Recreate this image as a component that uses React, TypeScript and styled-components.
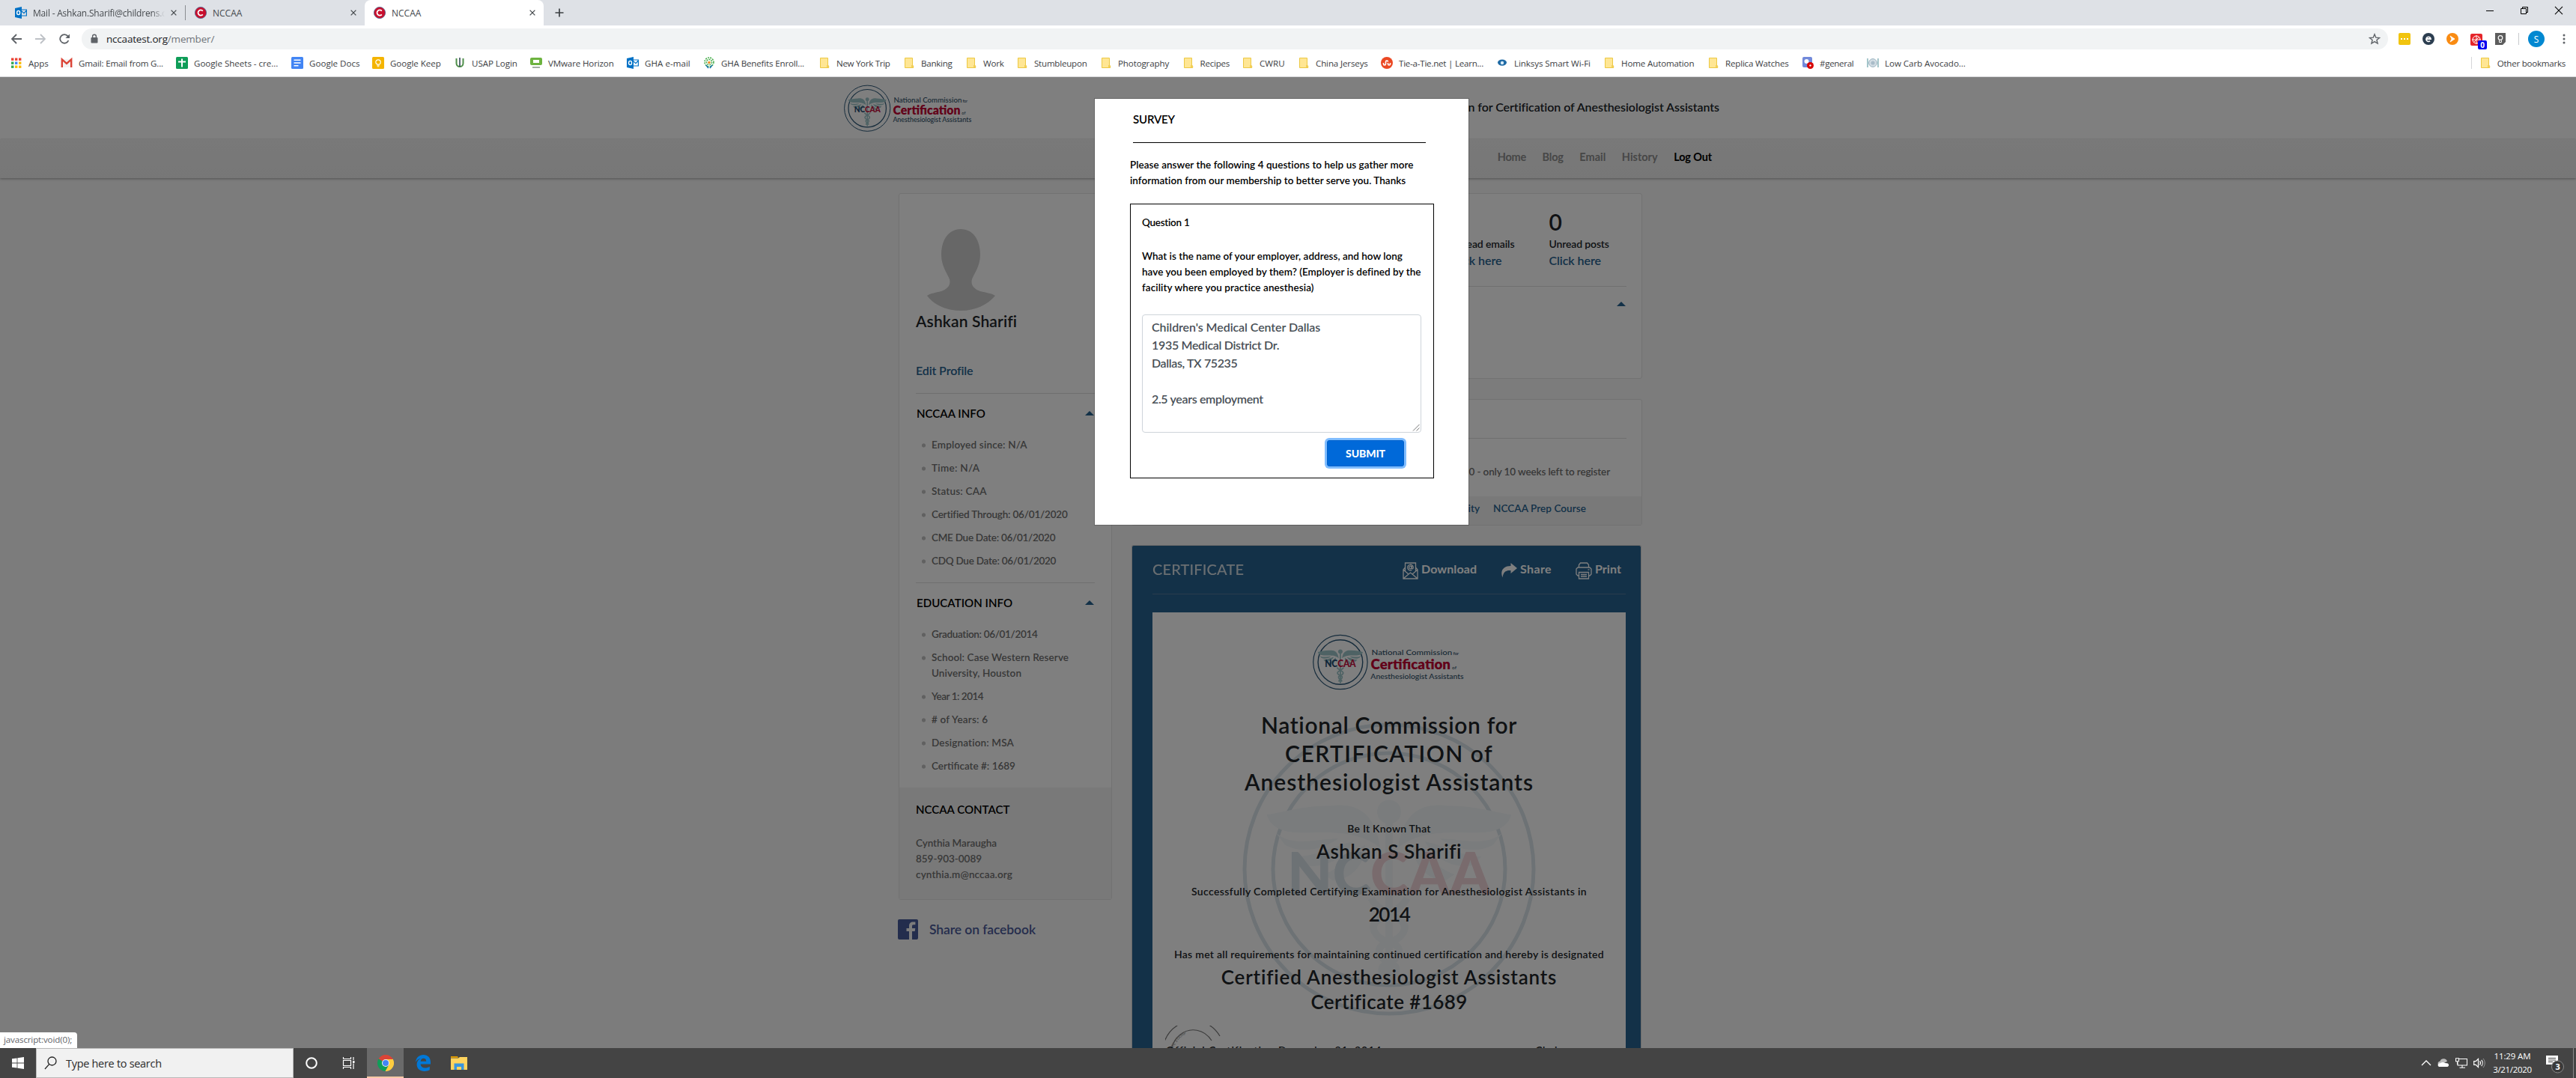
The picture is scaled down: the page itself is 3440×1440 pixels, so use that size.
import React from "react";
import styled, { createGlobalStyle, css } from "styled-components";

const UI = `"Open Sans", "Noto Sans", sans-serif`;
const BODY = `Lato, "Open Sans", sans-serif`;
const BLUE = "#266290";

const Global = createGlobalStyle`
  * { box-sizing: border-box; }
  html, body { margin: 0; background: #fff; }
  body { font-family: ${BODY}; font-weight: 500; overflow: hidden; }
`;

/* run of text with its own tracking */
const T = styled.span<{ $ls?: number }>`white-space: pre; justify-self: start; letter-spacing: ${(p) => p.$ls ?? 0}px;`;

const Screen = styled.div`
  width: 3440px; height: 1440px; display: flex; flex-direction: column; overflow: hidden;
`;

/* ---------- browser chrome ---------- */
const TabStrip = styled.div`
  height: 34px; flex: none; display: flex; align-items: center; background: #dee1e6; padding-left: 8px; font-family: ${UI}; font-size: 12px; color: #45494d; font-weight: 400;
`;
const Tab = styled.div<{ $active?: boolean }>`
  width: 239px; flex: none; height: 34px; display: flex; align-items: center; padding: 0 11px 0 12px; gap: 8px;
  ${(p) => p.$active && css`background: #fff; border-radius: 8px 8px 0 0;`}
  svg { flex: none; }
`;
const TabSeparator = styled.div`width: 1px; height: 20px; background: #8a8d91; flex: none;`;
const TabTitle = styled.div<{ $fade?: boolean }>`
  flex: 1 1 0; min-width: 0; overflow: hidden; white-space: nowrap;
  ${(p) => p.$fade && css`mask-image: linear-gradient(90deg, #000 90%, transparent);`}
`;
const WinButtons = styled.div`
  margin-left: auto; display: flex; height: 28px; align-items: center; align-self: flex-start; padding-right: 17px; gap: 34px;
`;
const NewTab = styled.div`display: flex; align-items: center; padding-left: 15px;`;

const Toolbar = styled.div`
  height: 36px; flex: none; background: #fff; display: flex; align-items: center; padding: 0 14px; font-family: ${UI}; font-weight: 400;
`;
const NavIcons = styled.div`display: flex; gap: 16px; width: 95px;`;
const Omnibox = styled.div`
  width: 3082px; height: 28px; border-radius: 14px; background: #f1f3f4; display: flex; align-items: center; padding: 0 10px 0 11px; font-size: 13.5px; color: #202124;
  svg:last-child { margin-left: auto; }
`;
const Url = styled.div`margin-left: 10px; i { font-style: normal; color: #70757a; }`;
const Extensions = styled.div`display: flex; align-items: center; flex: 1; padding-left: 14px; gap: 16px;`;
const Divider = styled.div`width: 1px; height: 16px; background: #c8cacd;`;
const Avatar = styled.div`
  width: 22px; height: 22px; border-radius: 50%; background: #0288d1; color: #fff; font-size: 12px; display: grid; place-items: center; margin: 0 8px 0 -4px;
`;
const ExtWithBadge = styled.div`position: relative; width: 16px; height: 16px;`;
const Badge = styled.div`
  position: absolute; left: 10px; top: 10px; width: 12px; height: 12px; border-radius: 2px; background: #0000f0; color: #fff; font-size: 10px; font-weight: 700; line-height: 12px; text-align: center;
`;
const Bookmarks = styled.div`
  height: 33px; flex: none; background: #fff; border-bottom: 1px solid #d5d6d8; display: flex; align-items: center; padding: 0 14px 4px; font-family: ${UI}; font-size: 11.6px; font-weight: 400; color: #3c4043;
`;
const Bookmark = styled.div<{ $w: number }>`width: ${(p) => p.$w}px; flex: none; display: flex; align-items: center; gap: 8px; white-space: nowrap; svg { flex: none; }`;
const OtherBookmarks = styled.div`margin-left: auto; display: flex; align-items: center; gap: 8px; border-left: 1px solid #d5d6d8; padding-left: 10px; height: 16px;`;

/* ---------- page ---------- */
const Page = styled.div`position: relative; height: 1297px; flex: none; overflow: hidden; background: #f8f8f8;`;
const Header = styled.div`height: 83px; background: #fff; display: flex; justify-content: space-between; padding: 10px 1144px 0 1127px;`;
const HeaderTitle = styled.div`font-size: 16px; line-height: 24px; color: #212529; padding-top: 18px; font-weight: 600; white-space: nowrap;`;
const NavBar = styled.div`
  height: 52px; background: linear-gradient(#f2f2f2, #efefef); box-shadow: 0 1px 3px rgba(0,0,0,.35); position: relative;
  display: flex; justify-content: flex-end; padding: 12px 1154px 0 0; gap: 21.5px; font-size: 14.5px; line-height: 24px; font-weight: 700;
`;
const NavLink = styled.div<{ $strong?: boolean }>`color: ${(p) => (p.$strong ? "#000" : "#8e8e8e")};`;
const Content = styled.div`display: grid; grid-template-columns: 285px 682px; column-gap: 26px; padding: 20px 0 0 1200px; align-items: start;`;
const Column = styled.div`display: flex; flex-direction: column;`;
const Card = styled.div<{ $h: number; $mb?: number }>`
  height: ${(p) => p.$h}px; margin-bottom: ${(p) => p.$mb ?? 0}px; background: #fff; border: 1px solid #e4e4e4; border-radius: 3px; display: flex; flex-direction: column;
`;
const SidePad = styled.div`padding: 47px 22px 18px 22px; flex: none;`;
const AvatarArt = styled.svg`display: block; margin-left: 14px;`;
const Name = styled.div`font-size: 21px; line-height: 26px; margin-top: 1px; color: #212529; font-weight: 600;`;
const EditLink = styled.div`font-size: 16px; line-height: 24px; margin-top: 41px; color: ${BLUE}; font-weight: 600;`;
const Rule = styled.div<{ $mt?: number }>`height: 1px; background: #dedede; margin-top: ${(p) => p.$mt ?? 0}px;`;
const Section = styled.div`display: flex; align-items: center; justify-content: space-between; margin: 14px 1px 20px 1px; font-size: 15px; line-height: 24px; color: #000; font-weight: 600;`;
const Triangle = styled.div`border: 6px solid transparent; border-top-width: 0; border-bottom-color: ${BLUE};`;
const List = styled.div`display: flex; flex-direction: column; gap: 10px; font-size: 13.5px; line-height: 21px; color: #707070; font-weight: 600;`;
const Item = styled.div`
  padding-left: 21px; display: grid;
  background: radial-gradient(circle at 10.5px 11px, #c2c2c2 2.2px, transparent 3px);
`;
const Contact = styled.div`flex: 1; background: #f2f2f2; padding: 17px 22px 0; font-size: 13.5px; line-height: 21px; color: #707070; font-weight: 600;`;
const ContactTitle = styled.div`font-size: 15px; line-height: 24px; color: #000; margin-bottom: 23px;`;
const Facebook = styled.div`display: flex; align-items: center; gap: 15px; margin: 26px 0 0 -1px; font-size: 17.5px; color: #4a5a9a; font-weight: 600;`;

const Stats = styled.div`display: grid; grid-template-columns: repeat(2, 132.5px); padding: 18px 0 0 424px; color: #212529; height: 123px; flex: none;`;
const Stat = styled.div`display: flex; flex-direction: column;`;
const StatNumber = styled.div`font-size: 30px; line-height: 38px; font-weight: 600;`;
const StatLabel = styled.div`font-size: 14px; line-height: 21px; font-weight: 600;`;
const StatLink = styled.div`font-size: 16px; line-height: 24px; color: ${BLUE}; font-weight: 600;`;
const MainRule = styled(Rule)`margin-left: 27px; margin-right: 20px; flex: none;`;
const Toggle = styled.div`display: flex; justify-content: flex-end; padding: 20px 21px 0 0;`;
const Notice = styled.div`height: 77px; padding: 34px 42px 0 0; text-align: right; font-size: 13.5px; line-height: 21px; color: #707070; font-weight: 600;`;
const Links = styled.div`flex: 1; background: #f2f2f2; display: flex; justify-content: flex-end; gap: 18px; padding: 6px 74px 0 0; font-size: 13.5px; line-height: 21px; color: ${BLUE}; font-weight: 600;`;

const Certificate = styled.div`background: ${BLUE}; border: 1px solid #d5d5d5; border-bottom: 0; border-radius: 3px 3px 0 0; height: 800px; padding: 19px 20px 0 27px; width: 681px;`;
const CertBar = styled.div`display: flex; justify-content: space-between; height: 45px; color: #fff; font-size: 20px; line-height: 24px; padding-right: 6px;`;
const CertTitle = styled.div`color: #f2f2f2; opacity: .85;`;
const Actions = styled.div`display: flex; gap: 32px; font-size: 16px; font-weight: 700;`;
const Action = styled.div`display: flex; gap: 4px; svg { margin-top: 3px; }`;
const CertRule = styled.div`height: 1px; background: #53799a; margin-bottom: 24px;`;
const Paper = styled.div`position: relative; background: #fff; height: 700px; padding-top: 29px; display: flex; flex-direction: column; align-items: center; color: #212529;`;
const Watermark = styled.svg`position: absolute; left: 118px; top: 145px;`;
const Stamp = styled.svg`position: absolute; left: 17px; top: 552px;`;
const PaperBody = styled.div`position: relative; display: flex; flex-direction: column; align-items: center;`;
const Headline = styled.div`font-size: 30px; line-height: 38px; margin-top: 26px; margin-bottom: 33px; display: flex; flex-direction: column; align-items: center; font-weight: 600;`;
const Small = styled.div`font-size: 14px; line-height: 21px; margin-bottom: 4.5px; font-weight: 600;`;
const Big = styled.div<{ $mb?: number }>`font-size: 26px; line-height: 33px; margin-bottom: ${(p) => p.$mb ?? 25.5}px; font-weight: 600;`;
const Signatures = styled.div`display: flex; width: 632px; padding: 0 40px 0 18px; justify-content: space-between; font-size: 14px; line-height: 21px; margin-top: 37px; font-weight: 600;`;

/* ---------- survey dialog ---------- */
const Backdrop = styled.div`position: absolute; inset: 0; background: rgba(0,0,0,.5); padding: 28px 0 0 1461px;`;
const Dialog = styled.div`width: 501px; height: 571px; background: #fff; background-clip: padding-box; border: 1px solid rgba(0,0,0,.2); padding: 15px 46px 0 47px; color: #000;`;
const DialogTitle = styled.div`margin: 0 11px 0 4px; height: 44px; border-bottom: 1px solid #000; font-size: 15px; line-height: 24px; font-weight: 600;`;
const Intro = styled.div`margin-top: 19px; font-size: 13.5px; line-height: 21px; font-weight: 600; display: grid;`;
const Question = styled.div`margin-top: 20px; height: 367px; border: 1px solid #000; padding: 14px 16px 0 15px; font-size: 13.5px; line-height: 21px; font-weight: 600;`;
const Prompt = styled.div`display: grid; margin: 24px 0 25px;`;
const Answer = styled.div`
  position: relative; height: 158px; border: 1px solid #ced4da; border-radius: 4px; padding: 4px 12px; font-size: 16px; line-height: 24px; color: #495057;
  display: grid; grid-auto-rows: 24px;
  svg { position: absolute; right: 1px; bottom: 1px; }
`;
const Submit = styled.button`
  display: block; margin: 10px 23px 0 auto; width: 103px; height: 35px; border: 1px solid #0062cc; border-radius: 3px; background: #0069d9; box-shadow: 0 0 0 3px #80bdff;
  color: #fff; font: 900 14px/21px ${BODY}; padding: 0;
`;

const StatusBubble = styled.div`
  position: absolute; left: 0; bottom: 0; width: 103px; height: 21px; background: #fff; border-radius: 0 4px 0 0; padding-left: 5px; font: 400 11.6px/20px ${UI}; color: #5f6368;
`;

/* ---------- taskbar ---------- */
const Taskbar = styled.div`height: 40px; flex: none; background: #444; display: flex; align-items: center; font-family: ${UI}; font-weight: 400; color: #fff;`;
const Cell = styled.div<{ $w: number; $on?: boolean }>`
  width: ${(p) => p.$w}px; height: 40px; display: grid; place-items: center; flex: none;
  ${(p) => p.$on && css`background: #6a6a6a; border-bottom: 2px solid #f8c9a6; padding-top: 2px;`}
`;
const Search = styled.div`width: 344px; height: 40px; background: #f1f1f1; border: 1px solid #b9b9b9; display: flex; align-items: center; gap: 12px; padding-left: 10px; font-size: 14.5px; color: #2b2b2b;`;
const Tray = styled.div`margin-left: auto; display: flex; align-items: center; padding-right: 3px; gap: 8px; height: 40px;`;
const Clock = styled.div`width: 54px; margin-right: 7px; display: flex; flex-direction: column; align-items: center; font-size: 11.5px; line-height: 18px;`;
const Peek = styled.div`width: 1px; height: 40px; background: #8a8a8a; margin-left: 3px;`;

/* ---------- drawings ---------- */
const Wings = ({ fill }: { fill: string }) => (
  <g fill={fill}>
    <circle cx="50" cy="31" r="4" />
    <rect x="48.8" y="33" width="2.4" height="56" rx="1" />
    {[1, -1].map((s) => (
      <g key={s} transform={s === 1 ? undefined : "translate(100 0) scale(-1 1)"}>
        <path d="M47 43C45 30 38 28 30 29 21 29 15 31 9 32 10 36 14 38 20 38 30 38 39 37 47 43Z" />
        <path d="M12 38C17 43 26 40 33 40 27 44 20 45 15 42Z" />
        <path d="M19 46C26 46 32 42 38 41 34 48 27 50 22 49Z" />
        <path d="M28 52C34 50 37 45 42 42 42 49 37 54 31 54Z" />
      </g>
    ))}
    <path fill="none" stroke={fill} strokeWidth="2.4" d="M44 60C47 66 57 66 55 71 53 76 45 74 47 79 49 83 54 81 52 86M56 60C53 66 43 66 45 71 47 76 55 74 53 79 51 83 46 81 48 86" />
  </g>
);

const Logo = ({ scale }: { scale: number }) => (
  <svg width={172 * scale} height={64 * scale} viewBox="0 0 172 64">
    <g fill="none" stroke="#2d5878">
      <circle cx="31.2" cy="31.7" r="30.6" strokeWidth="1" />
      <circle cx="31.2" cy="31.7" r="25.2" strokeWidth="1.2" />
    </g>
    <g transform="translate(.2 .5) scale(.62)"><Wings fill="#9cc4c8" /></g>
    <text x="13.7" y="37.2" fontSize="10.4" fontWeight="900" textLength="35" lengthAdjust="spacingAndGlyphs" fill="#1e4a70">
      NC<tspan fill="#c40d3c">CAA</tspan>
    </text>
    <g fill="#2f5068" fontSize="8.8">
      <text x="66.4" y="24" textLength="91" lengthAdjust="spacingAndGlyphs">National Commission</text>
      <text x="158.5" y="24" fontSize="5.5" textLength="6.5">for</text>
      <text x="65.6" y="40" fontSize="16" fontWeight="800" fill="#c40032" textLength="90" lengthAdjust="spacingAndGlyphs">Certification</text>
      <text x="157.2" y="40" fontSize="5.5" textLength="5.2">of</text>
      <text x="65.4" y="50.4" textLength="105" lengthAdjust="spacingAndGlyphs">Anesthesiologist Assistants</text>
    </g>
  </svg>
);

const Outlook = () => (
  <svg width="16" height="16" viewBox="0 0 16 16">
    <path fill="#0072c6" d="M0 2 9 0v16L0 14Z" />
    <path fill="none" stroke="#0072c6" strokeWidth="1.2" d="M9 4h6.4v8H9M9 6l3 2.6L15.4 5" />
    <ellipse cx="4.6" cy="8" rx="2" ry="2.6" fill="none" stroke="#fff" strokeWidth="1.4" />
  </svg>
);
const NccaaIcon = () => (
  <svg width="16" height="16" viewBox="0 0 16 16">
    <circle cx="8" cy="8" r="7.6" fill="#c8102e" stroke="#4b5f8a" strokeWidth=".8" />
    <path d="M10.8 5.6A3.6 3.6 0 1 0 10.8 10.4" fill="none" stroke="#fff" strokeWidth="1.8" />
  </svg>
);
const Cross = ({ s = 8, c = "#45494d", w = 1.6 }) => (
  <svg width={s} height={s} viewBox="0 0 10 10"><path d="M.8.8 9.2 9.2M9.2.8.8 9.2" stroke={c} strokeWidth={w} /></svg>
);
const Folder = () => (
  <svg width="16" height="16" viewBox="0 0 16 16">
    <path fill="#ffe694" stroke="#ecc843" d="M2.5 1.5h10V12h1.2v2.5H2.5Z" />
    <path fill="#f3cf57" d="M11 11h2.5v3.5H11Z" />
  </svg>
);
const Apps = () => (
  <svg width="16" height="16" viewBox="0 0 16 16">
    {["#ea4335", "#ea4335", "#ea4335", "#34a853", "#4285f4", "#fbbc05", "#34a853", "#fbbc05", "#fbbc05"].map((c, i) => (
      <rect key={i} x={1 + (i % 3) * 5} y={1.5 + Math.floor(i / 3) * 5} width="3.4" height="3.4" fill={c} />
    ))}
  </svg>
);
const Glyph = ({ k }: { k: string }) => {
  if (k === "apps") return <Apps />;
  if (k === "folder") return <Folder />;
  if (k === "outlook") return <Outlook />;
  return (
    <svg width="16" height="16" viewBox="0 0 16 16">
      {k === "gmail" && <><path fill="#f3f3f3" d="M1 3h14v11H1Z" /><path fill="none" stroke="#db4437" strokeWidth="2.4" d="M1.8 14V3.4L8 9l6.2-5.6V14" /></>}
      {k === "sheets" && <><rect width="16" height="16" rx="1.5" fill="#0f9d58" /><path d="M8 2.5v11M3 6.5h10" stroke="#fff" strokeWidth="2" /></>}
      {k === "docs" && <><rect width="16" height="16" rx="1.5" fill="#4285f4" /><path d="M3.5 4.2h9M3.5 8h9M3.5 11.8h6" stroke="#fff" strokeWidth="1.6" /></>}
      {k === "keep" && <><rect width="16" height="16" rx="1.5" fill="#f4b400" /><circle cx="8" cy="7" r="3.2" fill="none" stroke="#fff" strokeWidth="1.2" /><path d="M6.3 11.2h3.4M6.6 12.8h2.8" stroke="#fff" /></>}
      {k === "usap" && <><path d="M3.5 2v6.5a4.5 4.5 0 0 0 9 0V2" fill="none" stroke="#4e8f4a" strokeWidth="2" /><path d="M8 1v12" stroke="#345" strokeWidth="1.6" /></>}
      {k === "vm" && <><rect x="0" y="1" width="16" height="10" rx="2" fill="#6db33f" /><rect x="4" y="4" width="8" height="4" fill="#fff" /><path d="M3 14h10" stroke="#8a9a8a" strokeWidth="1.6" /></>}
      {k === "tree" && <><g stroke="#4caf50" strokeWidth="1.6" strokeDasharray="2 1.2" fill="none"><circle cx="8" cy="7" r="6" /><circle cx="8" cy="7" r="3.6" /></g><circle cx="8" cy="7.5" r="1.8" fill="#f28c28" /><path d="M4 11l3 4M12 11l-3 4" stroke="#1976a8" strokeWidth="1.6" /></>}
      {k === "tie" && <><circle cx="8" cy="8" r="8" fill="#eb4823" /><path d="M3.5 8v1.4a1.5 1.5 0 0 0 3 0V6.6a1.5 1.5 0 0 1 3 0M12.5 8v1.4a1.5 1.5 0 0 1-3 0V8" fill="none" stroke="#fff" strokeWidth="1.6" /></>}
      {k === "linksys" && <><ellipse cx="8" cy="7.6" rx="6" ry="4.2" fill="#1f6aa5" /><circle cx="8" cy="8" r="2.2" fill="#d8ecf8" /></>}
      {k === "general" && <><rect x="1" y="0" width="13" height="14" rx="2" fill="#7289da" /><circle cx="6.5" cy="6" r="3" fill="#fff" /><circle cx="11.5" cy="11.5" r="4.5" fill="#d80000" /><circle cx="11.5" cy="11.5" r="1.2" fill="#fff" /></>}
      {k === "carb" && <><path d="M1 2v12M15 2v12" stroke="#8fb8bf" strokeWidth="1.6" /><circle cx="8" cy="8" r="5.4" fill="#d3dde4" stroke="#9ab3c0" /><circle cx="8" cy="8" r="2.6" fill="#a9bcc9" /></>}
    </svg>
  );
};

/* icon, label, slot width, letter spacing */
const bookmarks: [string, string, number, number][] = [
  ["apps", "Apps", 67, -0.1], ["gmail", "Gmail: Email from G...", 154, -0.18], ["sheets", "Google Sheets - cre...", 154, -0.03], ["docs", "Google Docs", 108, 0],
  ["keep", "Google Keep", 109, -0.06], ["usap", "USAP Login", 102, -0.06], ["vm", "VMware Horizon", 129, -0.15], ["outlook", "GHA e-mail", 102, 0.02],
  ["tree", "GHA Benefits Enroll...", 154, -0.17], ["folder", "New York Trip", 113, -0.32], ["folder", "Banking", 83, -0.26], ["folder", "Work", 68, -0.26],
  ["folder", "Stumbleupon", 112, -0.24], ["folder", "Photography", 109.5, -0.14], ["folder", "Recipes", 79.5, -0.25], ["folder", "CWRU", 75, 0],
  ["folder", "China Jerseys", 111, -0.15], ["tie", "Tie-a-Tie.net | Learn...", 154, -0.24], ["linksys", "Linksys Smart Wi-Fi", 143, -0.1], ["folder", "Home Automation", 139, -0.15],
  ["folder", "Replica Watches", 126, -0.2], ["general", "#general", 87, -0.32], ["carb", "Low Carb Avocado...", 140, -0.06],
];

/* line(s), letter spacing */
const nccaaInfo: [string[], number][] = [
  [["Employed since: N/A"], 0.18], [["Time: N/A"], 0.3], [["Status: CAA"], 0.21], [["Certified Through: 06/01/2020"], -0.19],
  [["CME Due Date: 06/01/2020"], -0.27], [["CDQ Due Date: 06/01/2020"], -0.26],
];
const educationInfo: [string[], number][] = [
  [["Graduation: 06/01/2014"], -0.33], [["School: Case Western Reserve", "University, Houston"], 0.09], [["Year 1: 2014"], -0.49],
  [["# of Years: 6"], 0.2], [["Designation: MSA"], 0.16], [["Certificate #: 1689"], 0],
];
const InfoList = ({ rows }: { rows: [string[], number][] }) => (
  <List>{rows.map(([lines, ls]) => <Item key={lines[0]}>{lines.map((l) => <T key={l} $ls={ls}>{l}</T>)}</Item>)}</List>
);

export default function App() {
  return (
    <Screen>
      <Global />
      <TabStrip>
        <Tab><Outlook /><TabTitle $fade><T $ls={-0.2}>Mail - Ashkan.Sharifi@childrens.c</T></TabTitle><Cross /></Tab>
        <TabSeparator />
        <Tab><NccaaIcon /><TabTitle><T>NCCAA</T></TabTitle><Cross /></Tab>
        <Tab $active><NccaaIcon /><TabTitle><T>NCCAA</T></TabTitle><Cross /></Tab>
        <NewTab><svg width="12" height="12" viewBox="0 0 12 12"><path d="M6 .5v11M.5 6h11" stroke="#3c4043" strokeWidth="1.7" /></svg></NewTab>
        <WinButtons>
          <svg width="12" height="12" viewBox="0 0 12 12"><path d="M1 6.5h10" stroke="#000" /></svg>
          <svg width="12" height="12" viewBox="0 0 12 12"><path d="M1.5 3.5h7v7h-7ZM3.5 3V1.5h7v7H9" fill="none" stroke="#000" /></svg>
          <Cross s={12} c="#000" w={0.9} />
        </WinButtons>
      </TabStrip>
      <Toolbar>
        <NavIcons>
          <svg width="16" height="16" viewBox="0 0 16 16"><path d="M15 8H2.5M8 2 2 8l6 6" fill="none" stroke="#5f6368" strokeWidth="1.8" /></svg>
          <svg width="16" height="16" viewBox="0 0 16 16"><path d="M1 8h12.5M8 2l6 6-6 6" fill="none" stroke="#bdc1c6" strokeWidth="1.8" /></svg>
          <svg width="16" height="16" viewBox="0 0 16 16"><path d="M13.4 10A5.8 5.8 0 1 1 12.6 4.4L14 6" fill="none" stroke="#5f6368" strokeWidth="1.8" /><path d="M15 1.4V7H9.4Z" fill="#5f6368" /></svg>
        </NavIcons>
        <Omnibox>
          <svg width="12" height="14" viewBox="0 0 12 14"><rect x="1.5" y="5" width="9" height="7.5" rx="1" fill="#5f6368" /><path d="M3.6 5.5V3.6a2.4 2.4 0 0 1 4.8 0v1.9" fill="none" stroke="#5f6368" strokeWidth="1.4" /></svg>
          <Url><T $ls={-0.19}>nccaatest.org<i>/member/</i></T></Url>
          <svg width="16" height="16" viewBox="0 0 16 16"><path d="m8 1.8 1.8 4.4 4.7.3-3.6 3 1.2 4.6L8 11.6l-4.1 2.5 1.2-4.6-3.6-3 4.7-.3Z" fill="none" stroke="#5f6368" strokeWidth="1.4" /></svg>
        </Omnibox>
        <Extensions>
          <svg width="16" height="16" viewBox="0 0 16 16"><rect width="16" height="16" rx="2" fill="#f1c40f" /><path d="M3 8h2M7 8h2M11 8h2" stroke="#fff" strokeWidth="2" /></svg>
          <svg width="16" height="16" viewBox="0 0 16 16"><circle cx="8" cy="8" r="8" fill="#2c3e50" /><path d="M4.8 8h6.2A3 3 0 1 0 10 10.6" fill="none" stroke="#fff" strokeWidth="1.8" /></svg>
          <svg width="16" height="16" viewBox="0 0 16 16"><circle cx="8" cy="8" r="8" fill="#f98b12" /><path d="m5 4 6 4-6 4 2-4Z" fill="#fff" stroke="#fff" strokeWidth=".8" /></svg>
          <ExtWithBadge>
            <svg width="16" height="16" viewBox="0 0 16 16"><rect width="16" height="16" rx="2" fill="#e5252a" /><circle cx="8" cy="8" r="5" fill="none" stroke="#fff" /><path d="M8 2v12M2 8h12M4 12l8-8" stroke="#fff" strokeWidth=".9" /></svg>
            <Badge>0</Badge>
          </ExtWithBadge>
          <svg width="16" height="16" viewBox="0 0 16 16"><path fill="#5d5d5d" d="M1 0h14v12l-4 4H1Z" /><circle cx="8" cy="6.5" r="2.8" fill="none" stroke="#fff" strokeWidth="1.2" /><path d="M6.6 9.5v3h2.8v-3" fill="none" stroke="#fff" /></svg>
          <Divider />
          <Avatar>S</Avatar>
          <svg width="4" height="16" viewBox="0 0 4 16"><g fill="#5f6368"><circle cx="2" cy="3" r="1.5" /><circle cx="2" cy="8" r="1.5" /><circle cx="2" cy="13" r="1.5" /></g></svg>
        </Extensions>
      </Toolbar>
      <Bookmarks>
        {bookmarks.map(([k, label, w, ls], i) => (
          <Bookmark key={i} $w={w}><Glyph k={k} /><T $ls={ls}>{label}</T></Bookmark>
        ))}
        <OtherBookmarks><Folder /><T $ls={-0.26}>Other bookmarks</T></OtherBookmarks>
      </Bookmarks>

      <Page>
        <Header>
          <Logo scale={1} />
          <HeaderTitle><T $ls={-0.06}>National Commission for Certification of Anesthesiologist Assistants</T></HeaderTitle>
        </Header>
        <NavBar>
          <NavLink><T $ls={-0.2}>Home</T></NavLink><NavLink><T $ls={-0.16}>Blog</T></NavLink><NavLink><T>Email</T></NavLink><NavLink><T>History</T></NavLink><NavLink $strong><T $ls={-0.14}>Log Out</T></NavLink>
        </NavBar>
        <Content>
          <Column>
            <Card $h={944}>
              <SidePad>
                <AvatarArt width="92" height="109" viewBox="0 0 92 109"><path fill="#cfcfcf" d="M46 0C62 0 72 14 72 34 72 50 64 59 61 67 59 75 64 80 72 83 80 85 88 86 92 89 82 101 66 109 46 109 26 109 10 101 1 89 5 86 12 85 20 83 28 80 33 75 31 67 28 59 20 50 20 34 20 14 30 0 46 0Z" /></AvatarArt>
                <Name><T $ls={0.15}>Ashkan Sharifi</T></Name>
                <EditLink><T $ls={-0.12}>Edit Profile</T></EditLink>
                <Rule $mt={18} />
                <Section><T $ls={0.04}>NCCAA INFO</T><Triangle /></Section>
                <InfoList rows={nccaaInfo} />
                <Rule $mt={18} />
                <Section><T $ls={0.06}>EDUCATION INFO</T><Triangle /></Section>
                <InfoList rows={educationInfo} />
              </SidePad>
              <Contact>
                <ContactTitle><T $ls={0.02}>NCCAA CONTACT</T></ContactTitle>
                <div><T $ls={-0.08}>Cynthia Maraugha</T></div>
                <div><T $ls={-0.03}>859-903-0089</T></div>
                <div><T $ls={0.15}>cynthia.m@nccaa.org</T></div>
              </Contact>
            </Card>
            <Facebook>
              <svg width="27" height="27" viewBox="0 0 27 27"><rect width="27" height="27" rx="2" fill="#465a9a" /><path fill="#f8f8f8" d="M15 27V16h-3.5v-4H15V9c0-3.6 2-5.5 5.400-5.500h3v3.800H21c-1.600 0-2 .8-2 2V12h4.300l-.6 4H19v11Z" /></svg>
              <T $ls={-0.09}>Share on facebook</T>
            </Facebook>
          </Column>
          <Column>
            <Card $h={248} $mb={27}>
              <Stats>
                <Stat><StatNumber>0</StatNumber><StatLabel><T $ls={-0.11}>Unread emails</T></StatLabel><StatLink><T $ls={-0.07}>Click here</T></StatLink></Stat>
                <Stat><StatNumber>0</StatNumber><StatLabel><T $ls={-0.14}>Unread posts</T></StatLabel><StatLink><T $ls={-0.07}>Click here</T></StatLink></Stat>
              </Stats>
              <MainRule />
              <Toggle><Triangle /></Toggle>
            </Card>
            <Card $h={169} $mb={26}>
              <MainRule $mt={51} />
              <Notice><T $ls={-0.13}>0 - only 10 weeks left to register</T></Notice>
              <Links><T>Charity</T><T $ls={0.08}>NCCAA Prep Course</T></Links>
            </Card>
            <Certificate>
              <CertBar>
                <CertTitle><T $ls={0.15}>CERTIFICATE</T></CertTitle>
                <Actions>
                  <Action>
                    <svg width="21" height="23" viewBox="0 0 21 23"><g fill="none" stroke="#fff" strokeWidth="1.3"><path d="M3.5 12V1h14v11M3.5 7 1 10v12h19V10l-2.5-3M1 10l7 6-7 6M20 10l-7 6 7 6M8 16l2.5-2 2.5 2" /><circle cx="10.5" cy="7" r="1.8" /><path d="M12.300 5v3.200c.5 1.300 2 .6 2-1.200a3.800 3.800 0 1 0-2 3.400" /></g></svg>
                    <T $ls={0.09}>Download</T>
                  </Action>
                  <Action>
                    <svg width="22" height="22" viewBox="0 0 22 22"><path fill="#fff" d="M13.5 1 22 8l-8.5 7v-4C7 10.5 3.5 13 2.5 20.5-1 12 3 5 13.5 5Z" /></svg>
                    <T $ls={0.35}>Share</T>
                  </Action>
                  <Action>
                    <svg width="22" height="23" viewBox="0 0 22 23"><g fill="none" stroke="#fff" strokeWidth="1.3"><path d="M4.5 7V3.5l2-2.5h9l2 2.5V7M4.5 18H3l-2-2V9l2-2h16l2 2v7l-2 2h-1.5M4.5 13.5h13V22h-13ZM7 16.500h8M7 19h8" /><path d="M16.5 10h2" /></g></svg>
                    <T $ls={0.08}>Print</T>
                  </Action>
                </Actions>
              </CertBar>
              <CertRule />
              <Paper>
                <Watermark width="396" height="396" viewBox="0 0 396 396">
                  <g fill="none" stroke="#dbe4ea" strokeWidth="5"><circle cx="198" cy="198" r="193" /><circle cx="198" cy="198" r="155" /></g>
                  <g transform="translate(-1 -2) scale(3.98)"><Wings fill="#f4f8fa" /></g>
                  <text x="62" y="232" fontSize="78" fontWeight="900" textLength="272" lengthAdjust="spacingAndGlyphs" fill="#dbe4ea">NC<tspan fill="#f3d6da">CAA</tspan></text>
                </Watermark>
                <Stamp width="82" height="60" viewBox="0 0 82 60">
                  <path d="M2.5 60A40 42 0 0 1 73 14M13 60A30 34 0 0 1 62 20" fill="none" stroke="#777" strokeWidth="1.2" />
                  <path id="stampArc" d="M9 56A34 38 0 0 1 60 14" fill="none" />
                  <text fontSize="5.5" fill="#999"><textPath href="#stampArc">CERTIFICATE STAMP</textPath></text>
                </Stamp>
                <PaperBody>
                  <Logo scale={1.183} />
                  <Headline><T $ls={0.65}>National Commission for</T><T $ls={1.45}>CERTIFICATION of</T><T $ls={0.97}>Anesthesiologist Assistants</T></Headline>
                  <Small><T $ls={0.22}>Be It Known That</T></Small>
                  <Big><T $ls={0.53}>Ashkan S Sharifi</T></Big>
                  <Small><T $ls={0.38}>Successfully Completed Certifying Examination for Anesthesiologist Assistants in</T></Small>
                  <Big><T $ls={-1.44}>2014</T></Big>
                  <Small><T $ls={0.27}>Has met all requirements for maintaining continued certification and hereby is designated</T></Small>
                  <Big $mb={0}><T $ls={0.83}>Certified Anesthesiologist Assistants</T></Big>
                  <Big $mb={0}><T $ls={0.4}>Certificate #1689</T></Big>
                  <Signatures><T $ls={0.91}>Official Certification December 31, 2014</T><T $ls={0.5}>Chairperson</T></Signatures>
                </PaperBody>
              </Paper>
            </Certificate>
          </Column>
        </Content>
        <Backdrop>
          <Dialog>
            <DialogTitle><T $ls={-0.18}>SURVEY</T></DialogTitle>
            <Intro>
              <T $ls={0.04}>Please answer the following 4 questions to help us gather more</T>
              <T $ls={0.02}>information from our membership to better serve you. Thanks</T>
            </Intro>
            <Question>
              <T $ls={-0.27}>Question 1</T>
              <Prompt>
                <T $ls={0.01}>What is the name of your employer, address, and how long</T>
                <T $ls={0.04}>have you been employed by them? (Employer is defined by the</T>
                <T $ls={0.09}>facility where you practice anesthesia)</T>
              </Prompt>
              <Answer>
                <T $ls={-0.08}>Children's Medical Center Dallas</T>
                <T $ls={-0.32}>1935 Medical District Dr.</T>
                <T $ls={-0.38}>Dallas, TX 75235</T>
                <span />
                <T $ls={-0.35}>2.5 years employment</T>
                <svg width="10" height="10" viewBox="0 0 10 10"><path d="M1 9.5 9.5 1M5.5 9.5l4-4" stroke="#666" strokeWidth=".9" /></svg>
              </Answer>
              <Submit><T $ls={-0.09}>SUBMIT</T></Submit>
            </Question>
          </Dialog>
        </Backdrop>
        <StatusBubble><T $ls={-0.15}>javascript:void(0);</T></StatusBubble>
      </Page>

      <Taskbar>
        <Cell $w={48}><svg width="16" height="16" viewBox="0 0 16 16"><path fill="#fff" d="M0 2.3 6.6 1.4V7.6H0ZM7.4 1.3 16 0v7.600H7.400ZM0 8.400h6.600v6.200L0 13.700ZM7.400 8.400H16V16l-8.600-1.200Z" /></svg></Cell>
        <Search>
          <svg width="17" height="18" viewBox="0 0 17 18"><circle cx="10.5" cy="6.5" r="5.5" fill="none" stroke="#222" strokeWidth="1.3" /><path d="M6.6 10.6 1 17" stroke="#222" strokeWidth="1.3" /></svg>
          <T $ls={-0.3}>Type here to search</T>
        </Search>
        <Cell $w={48}><svg width="18" height="18" viewBox="0 0 18 18"><circle cx="9" cy="9" r="6.8" fill="none" stroke="#fff" strokeWidth="2" /></svg></Cell>
        <Cell $w={50}><svg width="17" height="16" viewBox="0 0 17 16"><path d="M1.5 4.5h10v7h-10ZM1.5 0v2.5h10V0M1.5 16v-2.5h10V16M15 0v4M15 8.5V16" fill="none" stroke="#fff" strokeWidth="1.2" /><rect x="14" y="5" width="2.5" height="3" fill="#fff" /></svg></Cell>
        <Cell $w={49} $on>
          <svg width="22" height="22" viewBox="0 0 22 22">
            <path fill="#db4437" d="M1.5 5.5A11 11 0 0 1 20.500 5.500L11 11Z" />
            <path fill="#0f9d58" d="M1.47 5.5A11 11 0 0 0 10.500 22L15.300 13.500 11 11Z" />
            <path fill="#ffcd40" d="M20.530 5.500A11 11 0 0 1 10.500 22L15.300 13.500 11 5.500Z" />
            <path fill="#db4437" d="M11 6h9.800L20 4.800 11 3Z" />
            <circle cx="11" cy="11" r="5" fill="#f1f1f1" /><circle cx="11" cy="11" r="4" fill="#4285f4" />
          </svg>
        </Cell>
        <Cell $w={51}><svg width="20" height="22" viewBox="0 0 20 22"><path fill="#0078d7" d="M0 9.700C.9 3.400 5 0 10.400 0 16.500 0 20 4.300 20 10v2.600H6.600c.3 3.300 2.600 5 6.100 5 2.300 0 4.300-.6 6.100-1.800v4.500C16.800 21.400 14.500 22 12 22 5.600 22 1.600 18.500 1.600 12.800c0-3.600 2-6.400 5.200-8C3.800 5.400 1.400 7.300 0 9.700ZM6.700 8.800h7.500c0-2.700-1.300-4.100-3.600-4.100-2.200 0-3.600 1.500-3.900 4.100Z" /></svg></Cell>
        <Cell $w={46}><svg width="22" height="18" viewBox="0 0 22 18"><path fill="#dd9a00" d="M0 0h9l1 2H0Z" /><path fill="#ffd45e" d="M0 2.500h10L12 1h10v17H0Z" /><path fill="#3a96dd" d="M4.500 18V9.500h13V18H14v-4H8v4Z" /></svg></Cell>
        <Tray>
          <svg width="14" height="14" viewBox="0 0 14 14"><path d="m1 10 6-6 6 6" fill="none" stroke="#fff" strokeWidth="1.3" /></svg>
          <svg width="16" height="14" viewBox="0 0 16 14"><path fill="#bbb" d="M1 9a3 3 0 0 1 2.500-4.500A5 5 0 0 1 13 4.800L5 9Z" /><path fill="#fff" d="M2 12a2.500 2.500 0 0 1 0-4.500c2 .3 3-1.500 5-1.500 2.500 0 3 1.800 6 1.200A2.500 2.500 0 0 1 13.500 12Z" /></svg>
          <svg width="16" height="14" viewBox="0 0 16 14"><path d="M5 1.500h10.500v8.500H3V6M9 10v3M5.500 13.300h7.500M.5.800h4v4h-4ZM2.500 5v4" fill="none" stroke="#fff" strokeWidth="1.1" /></svg>
          <svg width="17" height="14" viewBox="0 0 17 14"><path d="M.7 4.700h2.500L6.500 1.500v11L3.200 9.300H.7ZM8.500 4.500c1.200 1.400 1.200 3.600 0 5M10.700 2.800c2 2.400 2 6 0 8.400" fill="none" stroke="#fff" strokeWidth="1.2" /><path d="M13 1c3 3.500 3 8.500 0 12" fill="none" stroke="#999" /></svg>
          <Clock><T $ls={-0.13}>11:29 AM</T><T $ls={-0.31}>3/21/2020</T></Clock>
          <svg width="28" height="28" viewBox="0 0 28 28"><path fill="#fff" d="M3 4h16v12h-4l-3 3v-3H3Z" /><path d="M6 7.500h10M6 10h10M6 12.500h6" stroke="#444" strokeWidth="1.1" /><circle cx="18.5" cy="19" r="8" fill="#3a3a3a" stroke="#888" /><text x="15.5" y="23" fontSize="11" fontFamily="Open Sans" fontWeight="700" fill="#fff">3</text></svg>
          <Peek />
        </Tray>
      </Taskbar>
    </Screen>
  );
}
